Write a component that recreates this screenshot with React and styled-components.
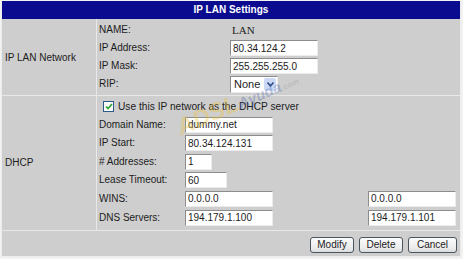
import React from 'react';
import styled, { createGlobalStyle } from 'styled-components';

const GlobalStyle = createGlobalStyle`
  html, body {
    margin: 0;
    padding: 0;
    background: #f2f2f2;
  }
  body {
    font-family: "Liberation Sans", Arial, sans-serif;
    font-size: 10px;
    color: #1c1c1c;
  }
`;

const Panel = styled.div`
  position: relative;
  box-sizing: border-box;
  width: 460px;
  margin: 1px 0 0 1px;
  background: #cecece;
  border-left: 1px solid #ececec;
  border-right: 1px solid #ececec;
  border-bottom: 1px solid #ececec;
  overflow: hidden;
`;

const Header = styled.div`
  height: 18px;
  line-height: 18px;
  background: #0b0b90;
  color: #fff;
  font-weight: bold;
  text-align: center;
`;

const Section = styled.div`
  display: grid;
  grid-template-columns: 95px 1fr;
  border-top: ${p => (p.first ? 'none' : '1px solid #e8e8e8')};
`;

const SideLabel = styled.div`
  display: flex;
  align-items: center;
  padding-left: 3px;
  border-right: 1px solid #e8e8e8;
`;

const Fields = styled.div`
  display: grid;
  grid-template-columns: ${p => p.cols};
  grid-auto-rows: 16px;
  row-gap: ${p => p.gap || '2px'};
  padding: ${p => p.pad};
  align-items: center;
`;

const Label = styled.span`
  line-height: 16px;
`;

const SerifValue = styled.span`
  font-family: "Liberation Serif", "Times New Roman", serif;
  font-size: 11px;
  padding-left: 2px;
`;

const Input = styled.input`
  box-sizing: border-box;
  width: ${p => p.w || 88}px;
  height: 16px;
  margin: 0;
  padding: 0 0 0 2px;
  font-family: "Liberation Sans", Arial, sans-serif;
  font-size: 10px;
  color: #1c1c1c;
  background: #fff;
  border: 1px solid;
  border-color: #8c8c8c #ececec #ececec #8c8c8c;
  outline: none;
`;

const Select = styled.div`
  box-sizing: border-box;
  display: flex;
  align-items: center;
  justify-content: space-between;
  width: 48px;
  height: 17px;
  padding: 1px 1px 1px 3px;
  background: #fff;
  border: 1px solid;
  border-color: #8c8c8c #ececec #ececec #8c8c8c;
  font-size: 11px;
`;

const DropButton = styled.span`
  display: flex;
  align-items: center;
  justify-content: center;
  width: 12px;
  height: 13px;
  background: #cbd9f5;
  border-radius: 2px;
`;

const CheckRow = styled.label`
  grid-column: 1 / -1;
  display: flex;
  align-items: center;
  gap: 4px;
  padding-left: 4px;
  height: 15px;
  font-size: 10.2px;
`;

const CheckBox = styled.span`
  box-sizing: border-box;
  display: flex;
  align-items: center;
  justify-content: center;
  width: 11px;
  height: 11px;
  background: #fafafa;
  border: 1px solid #2b5a84;
`;

const ButtonBar = styled.div`
  display: flex;
  justify-content: flex-end;
  gap: 5px;
  padding: 6px 3px 3px 0;
  border-top: 1px solid #e8e8e8;
`;

const Button = styled.button`
  box-sizing: border-box;
  height: 16px;
  min-width: ${p => p.w}px;
  padding: 0 6px;
  font-family: "Liberation Sans", Arial, sans-serif;
  font-size: 10px;
  color: #1c1c1c;
  background: linear-gradient(#fbfbfb, #ececec 70%, #dcdcdc);
  border: 1px solid #4a5560;
  border-radius: 3px;
`;

/* faint site watermark lying across the form */
const Watermark = styled.div`
  position: absolute;
  left: 183px;
  top: 114px;
  line-height: 24px;
  transform: rotate(-24deg);
  transform-origin: left bottom;
  font-weight: bold;
  font-style: italic;
  white-space: nowrap;
  pointer-events: none;
`;

const Mark = styled.span`
  color: ${p => p.color};
  font-size: ${p => p.size}px;
`;

export default function App() {
  return (
    <>
      <GlobalStyle />
      <Panel>
        <Header>IP LAN Settings</Header>
        <Section first>
          <SideLabel>IP LAN Network</SideLabel>
          <Fields cols="131px 1fr" pad="3px 2px 3px 2px">
            <Label>NAME:</Label>
            <SerifValue>LAN</SerifValue>
            <Label>IP Address:</Label>
            <Input defaultValue="80.34.124.2" />
            <Label>IP Mask:</Label>
            <Input defaultValue="255.255.255.0" />
            <Label>RIP:</Label>
            <Select>
              None
              <DropButton>
                <svg width="7" height="5" viewBox="0 0 7 5">
                  <path d="M0.5 0.5 L3.5 3.8 L6.5 0.5" fill="none" stroke="#34508a" strokeWidth="1.6" />
                </svg>
              </DropButton>
            </Select>
          </Fields>
        </Section>
        <Section>
          <SideLabel>DHCP</SideLabel>
          <Fields cols="86px 183px 1fr" gap="2.6px" pad="2px 2px 4px 2px">
            <CheckRow>
              <CheckBox>
                <svg width="8" height="7" viewBox="0 0 8 7">
                  <path d="M1 3.5 L3 5.5 L7 1" fill="none" stroke="#2da12d" strokeWidth="1.7" />
                </svg>
              </CheckBox>
              Use this IP network as the DHCP server
            </CheckRow>
            <Label>Domain Name:</Label>
            <Input defaultValue="dummy.net" />
            <span />
            <Label>IP Start:</Label>
            <Input defaultValue="80.34.124.131" />
            <span />
            <Label># Addresses:</Label>
            <Input w={27} defaultValue="1" />
            <span />
            <Label>Lease Timeout:</Label>
            <Input w={42} defaultValue="60" />
            <span />
            <Label>WINS:</Label>
            <Input defaultValue="0.0.0.0" />
            <Input defaultValue="0.0.0.0" />
            <Label>DNS Servers:</Label>
            <Input defaultValue="194.179.1.100" />
            <Input defaultValue="194.179.1.101" />
          </Fields>
        </Section>
        <ButtonBar>
          <Button w={44}>Modify</Button>
          <Button w={44}>Delete</Button>
          <Button w={49}>Cancel</Button>
        </ButtonBar>
        <Watermark>
          <Mark color="rgba(236, 196, 60, 0.35)" size={24}>ADSL</Mark>
          <Mark color="rgba(50, 80, 160, 0.28)" size={15}>Ayuda</Mark>
          <Mark color="rgba(110, 110, 130, 0.22)" size={8}>.com</Mark>
        </Watermark>
      </Panel>
    </>
  );
}
